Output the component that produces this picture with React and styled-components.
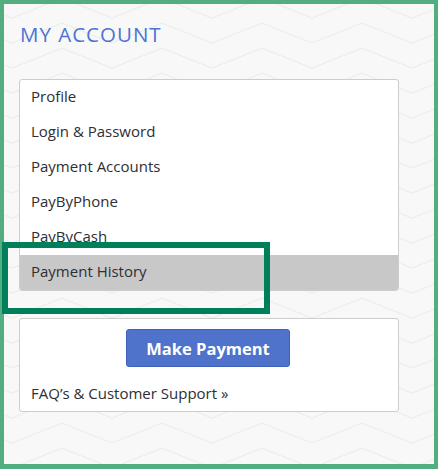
import React from "react";
import styled, { createGlobalStyle } from "styled-components";

const chevron = encodeURIComponent(
  `<svg xmlns="http://www.w3.org/2000/svg" width="100" height="25"><polyline points="0,3 50,23 100,3" fill="none" stroke="#ededed" stroke-width="1.2"/></svg>`
);

const Global = createGlobalStyle`
  html, body { margin: 0; padding: 0; background: #f8f8f8; }
  body { font-family: "Open Sans", "Liberation Sans", sans-serif; }
  * { box-sizing: border-box; }
`;

const Frame = styled.div`
  position: relative;
  width: 438px;
  height: 469px;
  border: 4px solid #52ae80;
  border-bottom-width: 5px;
  background-color: #f8f8f8;
  background-image: url("data:image/svg+xml,${chevron}");
  background-position: 58px 16px;
  padding: 18px 35px 0 15px;
`;

const Title = styled.h1`
  margin: 0 0 0 1px;
  font-family: "Open Sans", "Liberation Sans", sans-serif;
  font-weight: 400;
  font-size: 20.5px;
  line-height: 24px;
  letter-spacing: 1px;
  color: #4d73d3;
`;

const Card = styled.div`
  margin-top: ${(p) => p.$gap}px;
  background: #fff;
  border: 1px solid #cdcdcd;
  border-radius: 3px;
  overflow: hidden;
`;

const Menu = styled.ul`
  list-style: none;
  margin: 0;
  padding: 0;
`;

const Item = styled.li`
  height: 35px;
  line-height: 32px;
  padding-left: 11px;
  font-size: 15px;
  color: #2e2e33;
  background: ${(p) => (p.$active ? "#c8c8c8" : "transparent")};
`;

const ActionBody = styled.div`
  display: flex;
  flex-direction: column;
  padding: 10px 11px 8px;
`;

const PayButton = styled.button`
  align-self: center;
  width: 164px;
  height: 38px;
  margin-left: -2px;
  background: #4f73cb;
  border: 1px solid #3f60b6;
  border-radius: 3px;
  color: #fff;
  font-family: "Open Sans", "Liberation Sans", sans-serif;
  font-weight: 700;
  font-size: 16.5px;
`;

const FaqLink = styled.a`
  margin-top: 16px;
  font-size: 15px;
  line-height: 20px;
  color: #2e2e33;
  text-decoration: none;
`;

const Highlight = styled.div`
  position: absolute;
  left: -2px;
  top: 238px;
  width: 268px;
  height: 72px;
  border: 6px solid #00805a;
  pointer-events: none;
`;

const items = [
  "Profile",
  "Login & Password",
  "Payment Accounts",
  "PayByPhone",
  "PayByCash",
  "Payment History",
];

export default function App() {
  return (
    <>
      <Global />
      <Frame>
        <Title>MY ACCOUNT</Title>
        <Card $gap={33}>
          <Menu>
            {items.map((t) => (
              <Item key={t} $active={t === "Payment History"}>
                {t}
              </Item>
            ))}
          </Menu>
        </Card>
        <Card $gap={27}>
          <ActionBody>
            <PayButton>Make Payment</PayButton>
            <FaqLink href="#">FAQ’s &amp; Customer Support »</FaqLink>
          </ActionBody>
        </Card>
        <Highlight />
      </Frame>
    </>
  );
}
